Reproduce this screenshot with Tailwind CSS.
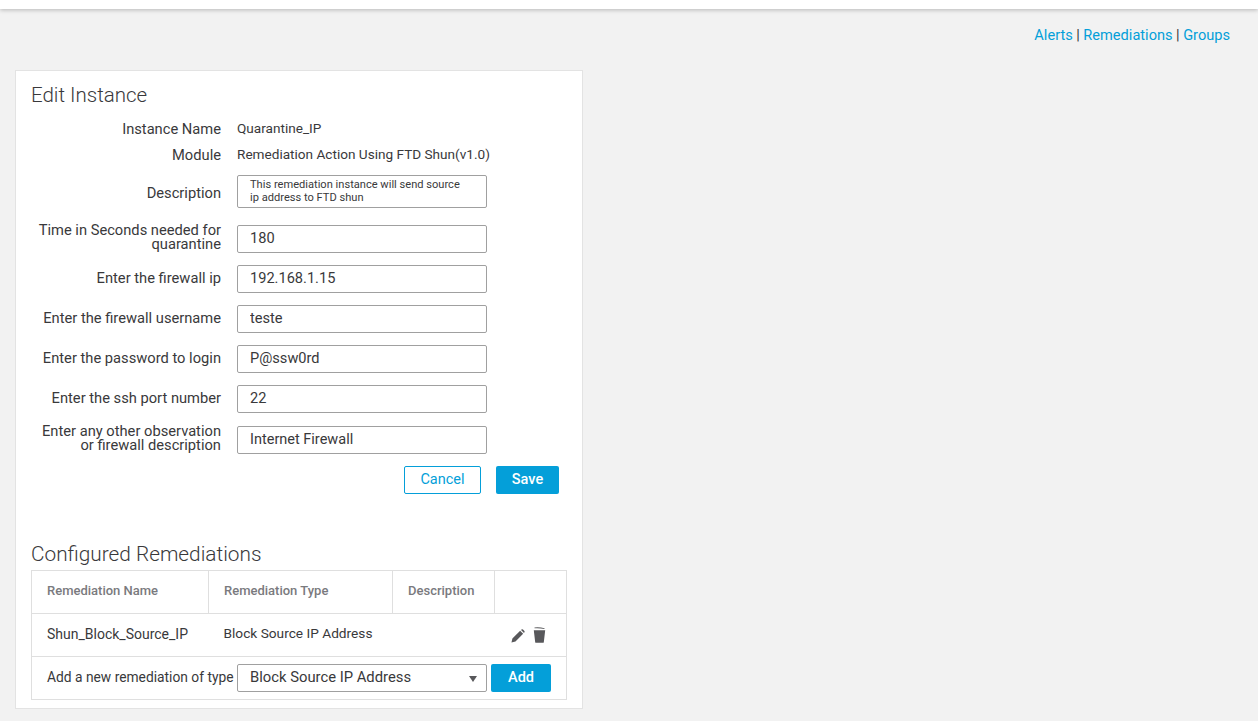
<!DOCTYPE html>
<html>
<head>
<meta charset="utf-8">
<script src="https://cdn.jsdelivr.net/npm/@tailwindcss/browser@4"></script>
</head>
<body class="bg-[#f2f2f2] font-['Roboto',sans-serif] text-[#39393b] h-[721px] overflow-hidden">
<header class="h-[9px] bg-white shadow-[0_1px_4px_rgba(0,0,0,0.25)]"></header>
<nav class="flex justify-end pr-[28px] pt-[18px] h-[61px] text-[14.6px] leading-[17px]">
  <a class="text-[#049fd9]">Alerts</a><span class="mx-[3.5px]">|</span><a class="text-[#049fd9]">Remediations</a><span class="mx-[3.5px]">|</span><a class="text-[#049fd9]">Groups</a>
</nav>
<main class="ml-[15px] w-[568px] h-[639px] bg-white border border-[#e3e3e3] px-[15px]">
  <h2 class="text-[20.5px] font-light leading-[24px] mt-[12px] text-[#39393b]">Edit Instance</h2>
  <div class="flex items-center h-[26px] mt-[9px]">
    <label class="w-[190px] text-right text-[14.7px]">Instance Name</label>
    <span class="ml-[16px] text-[13.6px] pb-[2px]">Quarantine_IP</span>
  </div>
  <div class="flex items-center h-[26px]">
    <label class="w-[190px] text-right text-[14.7px]">Module</label>
    <span class="ml-[16px] text-[13.6px] pb-[2px]">Remediation Action Using FTD Shun(v1.0)</span>
  </div>
  <div class="flex items-center mt-[7px] h-[33px]">
    <label class="w-[190px] text-right text-[14.7px] pt-[3px]">Description</label>
    <div class="ml-[16px] w-[250px] h-[33px] border border-[#a0a0a0] rounded-[2px] pl-[12px] pr-[20px] pt-[2px] text-[11.1px] leading-[13px]">This remediation instance will send source ip address to FTD shun</div>
  </div>
  <div class="flex items-center h-[28px] mt-[17px]">
    <label class="w-[190px] text-right text-[14.7px] leading-[14.5px] pb-[4px]">Time in Seconds needed for quarantine</label>
    <input class="ml-[16px] w-[250px] h-[28px] border border-[#a0a0a0] rounded-[2px] px-[12px] pb-[2px] text-[14.6px] text-[#39393b]" value="180">
  </div>
  <div class="flex items-center h-[28px] mt-[12px]">
    <label class="w-[190px] text-right text-[14.7px] pb-[2px]">Enter the firewall ip</label>
    <input class="ml-[16px] w-[250px] h-[28px] border border-[#a0a0a0] rounded-[2px] px-[12px] pb-[2px] text-[14.6px] text-[#39393b]" value="192.168.1.15">
  </div>
  <div class="flex items-center h-[28px] mt-[12px]">
    <label class="w-[190px] text-right text-[14.7px] pb-[2px]">Enter the firewall username</label>
    <input class="ml-[16px] w-[250px] h-[28px] border border-[#a0a0a0] rounded-[2px] px-[12px] pb-[2px] text-[14.6px] text-[#39393b]" value="teste">
  </div>
  <div class="flex items-center h-[28px] mt-[12px]">
    <label class="w-[190px] text-right text-[14.7px] pb-[2px]">Enter the password to login</label>
    <input class="ml-[16px] w-[250px] h-[28px] border border-[#a0a0a0] rounded-[2px] px-[12px] pb-[2px] text-[14.6px] text-[#39393b]" value="P@ssw0rd">
  </div>
  <div class="flex items-center h-[28px] mt-[12px]">
    <label class="w-[190px] text-right text-[14.7px] pb-[2px]">Enter the ssh port number</label>
    <input class="ml-[16px] w-[250px] h-[28px] border border-[#a0a0a0] rounded-[2px] px-[12px] pb-[2px] text-[14.6px] text-[#39393b]" value="22">
  </div>
  <div class="flex items-center h-[28px] mt-[13px]">
    <label class="w-[190px] text-right text-[14.7px] leading-[14px] pb-[4px]">Enter any other observation or firewall description</label>
    <input class="ml-[16px] w-[250px] h-[28px] border border-[#a0a0a0] rounded-[2px] px-[12px] pb-[2px] text-[14.5px] text-[#39393b]" value="Internet Firewall">
  </div>
  <div class="flex justify-end gap-[15px] mt-[12px] pr-[8px]">
    <button class="w-[77px] h-[28px] border border-[#049fd9] rounded-[2px] text-[#049fd9] text-[14.5px] bg-white">Cancel</button>
    <button class="w-[63px] h-[28px] rounded-[2px] bg-[#049fd9] text-white text-[14.5px] font-medium">Save</button>
  </div>
  <h2 class="text-[20.8px] font-light leading-[24px] mt-[48px] text-[#39393b]">Configured Remediations</h2>
  <table class="mt-[4px] w-[535px] h-[130px] table-fixed border-collapse border border-[#dfdfdf] text-[13.7px]">
    <colgroup><col class="w-[177px]"><col class="w-[184px]"><col class="w-[102px]"><col class="w-[72px]"></colgroup>
    <tr class="h-[43px] border-b border-[#dfdfdf] text-[13px] text-[#7a7a7e]">
      <th class="text-left font-medium pl-[15px] pb-[2px] border-r border-[#dfdfdf]">Remediation Name</th>
      <th class="text-left font-medium pl-[15px] pb-[2px] border-r border-[#dfdfdf]">Remediation Type</th>
      <th class="text-left font-medium pl-[15px] pb-[2px] border-r border-[#dfdfdf]">Description</th>
      <th></th>
    </tr>
    <tr class="h-[43px] border-b border-[#dfdfdf]">
      <td class="pl-[15px] pb-[2px] text-[14px]">Shun_Block_Source_IP</td>
      <td class="pl-[15px] pb-[3px]">Block Source IP Address</td>
      <td></td>
      <td class="pl-[16px]">
        <div class="flex items-center gap-[8px]">
          <svg width="14" height="14" viewBox="0 0 15 15" class="text-[#58585b] mt-[2px]"><path fill="currentColor" d="M0.5 14.5 L1.5 10.2 L9.8 2 L13 5.2 L4.8 13.5 Z M10.8 1 L11.6 0.4 Q12.2 0.1 12.8 0.6 L14.4 2.2 Q14.8 2.8 14.4 3.4 L13.9 4.2 Z"/></svg>
          <svg width="13" height="16" viewBox="0 0 13 16" class="text-[#58585b]"><path fill="currentColor" d="M1.5 0.4 Q6.5 -0.2 11.5 1.2 L11.5 2 Q6.5 0.9 1.5 1.3 Z M0.8 3.2 H12.2 L10.8 15.2 Q10.7 15.8 10 15.8 H3 Q2.3 15.8 2.2 15.2 Z"/></svg>
        </div>
      </td>
    </tr>
    <tr>
      <td colspan="4" class="pl-[15px]">
        <div class="flex items-center">
          <span class="w-[190px] whitespace-nowrap pb-[2px] text-[13.8px]">Add a new remediation of type</span>
          <div class="relative w-[250px] h-[28px] border border-[#a0a0a0] rounded-[2px] pl-[12px] text-[14.8px] leading-[24px] text-[#39393b]">Block Source IP Address
            <span class="absolute right-[9px] top-[11px] w-0 h-0 border-x-[4px] border-x-transparent border-t-[6px] border-t-[#58585b]"></span>
          </div>
          <button class="ml-[4px] w-[60px] h-[28px] rounded-[2px] bg-[#049fd9] text-white text-[14.5px] font-medium">Add</button>
        </div>
      </td>
    </tr>
  </table>
</main>
</body>
</html>
